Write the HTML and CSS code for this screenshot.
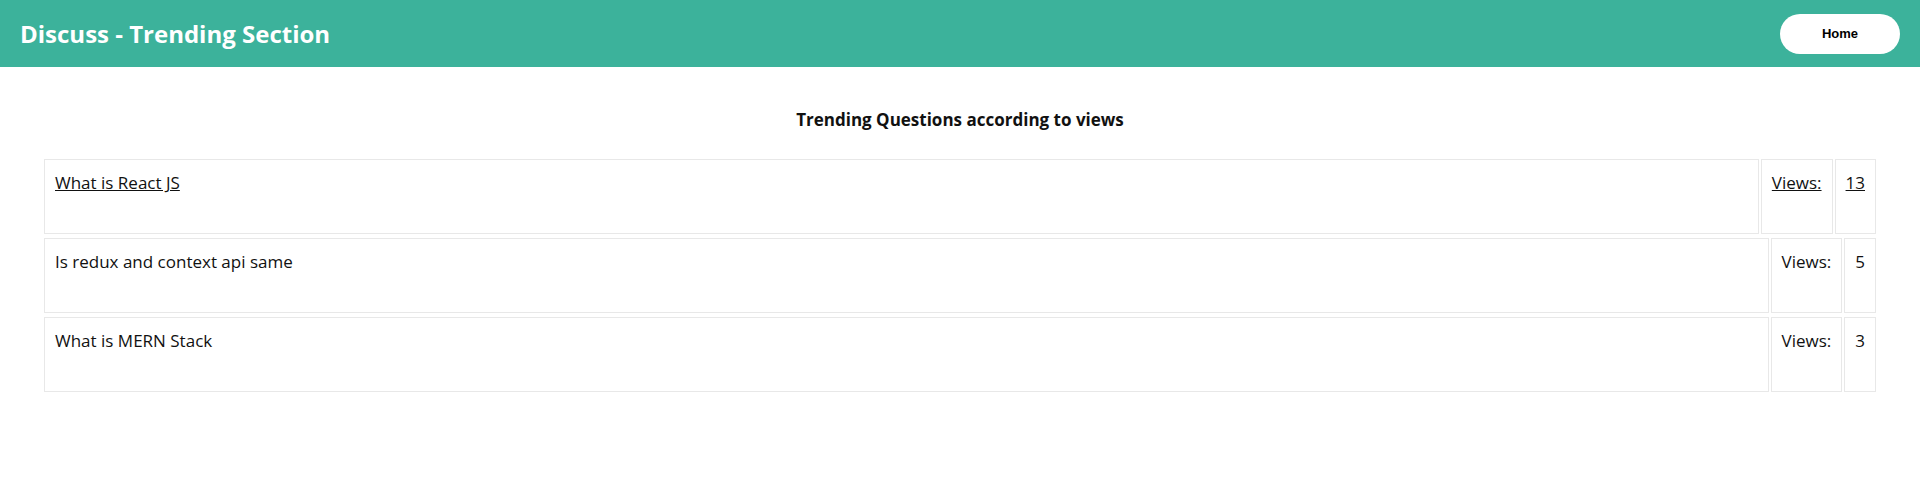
FILE: index.html
```html
<!DOCTYPE html>
<html lang="en">
<head>
  <meta charset="UTF-8">
  <meta name="viewport" content="width=device-width, initial-scale=1.0">
  <title>Discuss - Trending Section</title>
  <link rel="stylesheet" href="styles.css">
</head>
<body>
  <!-- Top bar -->
  <header class="topbar">
    <h1 class="brand">Discuss - Trending Section</h1>
    <button class="home-btn">Home</button>
  </header>

  <main class="trending">
    <h3 class="trending-title">Trending Questions according to views</h3>

    <table class="question-row active">
      <tr>
        <td class="question"><a href="#">What is React JS</a></td>
        <td class="views-label"><a href="#">Views:</a></td>
        <td class="views-count"><a href="#">13</a></td>
      </tr>
    </table>

    <table class="question-row">
      <tr>
        <td class="question"><a href="#">Is redux and context api same</a></td>
        <td class="views-label"><a href="#">Views:</a></td>
        <td class="views-count"><a href="#">5</a></td>
      </tr>
    </table>

    <table class="question-row">
      <tr>
        <td class="question"><a href="#">What is MERN Stack</a></td>
        <td class="views-label"><a href="#">Views:</a></td>
        <td class="views-count"><a href="#">3</a></td>
      </tr>
    </table>
  </main>
</body>
</html>
```

FILE: styles.css
```css
body {
  margin: 0;
  font-family: "Open Sans", sans-serif;
  color: #111;
}

.topbar {
  display: flex;
  align-items: center;
  justify-content: space-between;
  height: 67px;
  padding: 0 20px;
  background-color: #3cb29b;
}

.brand {
  margin: 0;
  color: white;
  font-size: 24px;
  font-weight: 700;
}

.home-btn {
  width: 120px;
  height: 40px;
  border: none;
  border-radius: 20px;
  background-color: white;
  font-family: "Liberation Sans", Arial, sans-serif;
  font-size: 13px;
  font-weight: 700;
  color: #000;
  cursor: pointer;
}

.trending {
  padding: 0 42px;
}

.trending-title {
  margin: 41px 0 26px;
  text-align: center;
  font-size: 17px;
  font-weight: 700;
}

.question-row {
  width: 100%;
  border-spacing: 2px;
}

.question-row td {
  height: 52px;
  padding: 11px 10px 10px;
  border: 1px solid #e8e8e8;
  vertical-align: top;
  font-size: 17px;
}

.question-row a {
  color: #111;
  text-decoration: none;
}

.question-row.active a {
  text-decoration: underline;
}

.views-label,
.views-count {
  width: 1%;
  white-space: nowrap;
}
```
